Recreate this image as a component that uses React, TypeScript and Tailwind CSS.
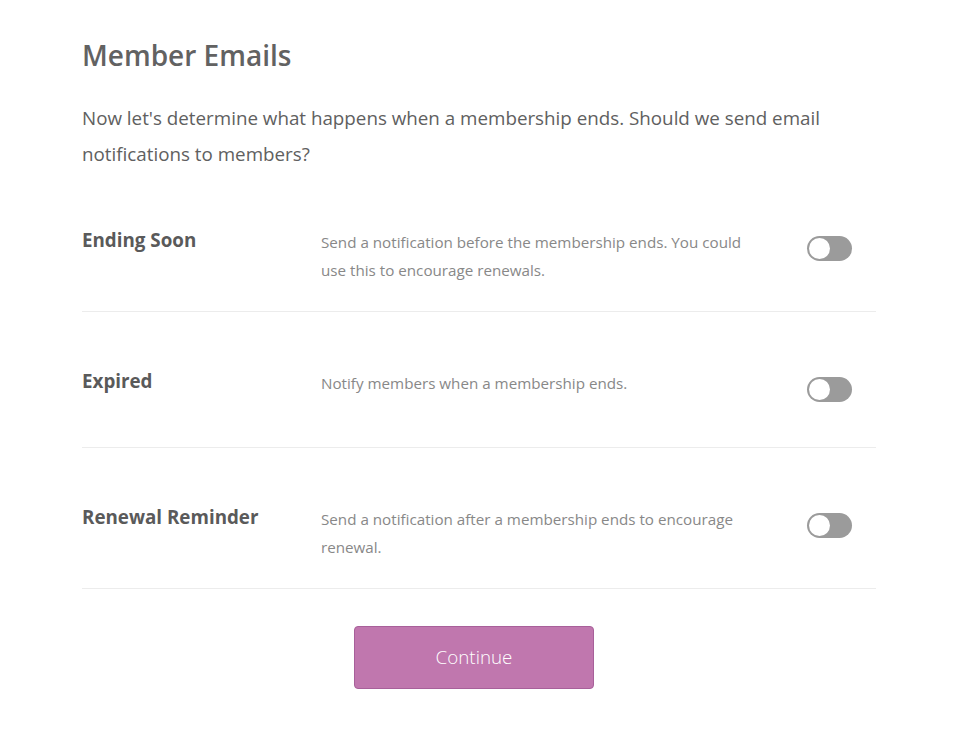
import React, { useState } from 'react'

type EmailSetting = {
  id: string
  label: string
  description: string
}

const settings: EmailSetting[] = [
  {
    id: 'ending-soon',
    label: 'Ending Soon',
    description: 'Send a notification before the membership ends. You could use this to encourage renewals.',
  },
  {
    id: 'expired',
    label: 'Expired',
    description: 'Notify members when a membership ends.',
  },
  {
    id: 'renewal-reminder',
    label: 'Renewal Reminder',
    description: 'Send a notification after a membership ends to encourage renewal.',
  },
]

const Toggle = ({ checked, onChange }: { checked: boolean; onChange: () => void }) => (
  <button
    type="button"
    onClick={onChange}
    className={`relative h-[25px] w-[45px] rounded-full ${checked ? 'bg-[#c077ae]' : 'bg-[#9b9b9b]'}`}
  >
    <span
      className={`absolute top-[2px] h-[21px] w-[21px] rounded-full bg-white ${checked ? 'left-[22px]' : 'left-[2px]'}`}
    />
  </button>
)

export default function App() {
  const [enabled, setEnabled] = useState<Record<string, boolean>>({})

  return (
    <div className="min-h-[730px] bg-white font-['Open_Sans',sans-serif]">
      <div className="ml-[82px] w-[794px] pt-[35px]">
        <h1 className="text-[28px] font-semibold leading-[40px] text-[#626262]">Member Emails</h1>
        <p className="mt-[25px] text-[18.8px] leading-[36px] text-[#606060]">
          Now let's determine what happens when a membership ends. Should we send email notifications to members?
        </p>

        <div className="-mt-[1px]">
          {settings.map((s) => (
            <div key={s.id} className="flex min-h-[136px] border-b border-[#ececec] pt-[59px] pb-[27px]">
              <div className="w-[239px] text-[18.8px] font-bold leading-[20px] text-[#5a5a5a]">{s.label}</div>
              <div className="-mt-[2px] w-[430px] text-[15.2px] leading-[28px] text-[#888]">{s.description}</div>
              <div className="ml-[56px] pt-[6px]">
                <Toggle
                  checked={!!enabled[s.id]}
                  onChange={() => setEnabled((e) => ({ ...e, [s.id]: !e[s.id] }))}
                />
              </div>
            </div>
          ))}
        </div>

        <button
          type="button"
          className="ml-[272px] mt-[37px] h-[63px] w-[240px] rounded-[4px] border border-[#a8609a] bg-[#c077ae] text-[18.8px] font-light text-white"
        >
          Continue
        </button>
      </div>
    </div>
  )
}
